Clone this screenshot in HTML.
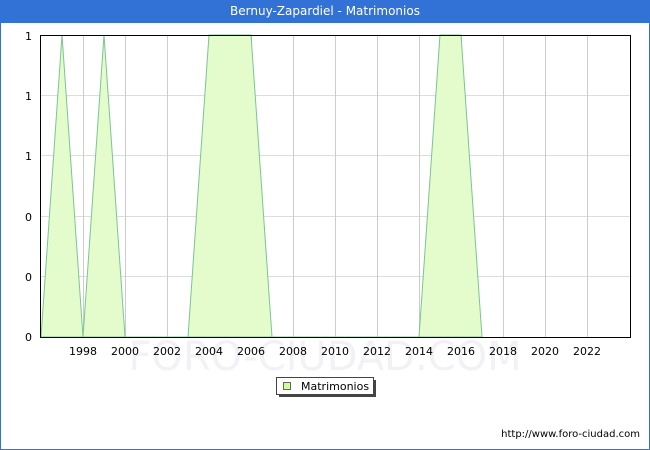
<!DOCTYPE html><html><head><style>
body{margin:0;width:650px;height:450px;overflow:hidden;font-family:"DejaVu Sans","Liberation Sans",sans-serif;}
.f{position:absolute;left:0;top:0;width:648px;height:448px;border:1px solid #3272d6;background:#fff}
.t{position:absolute;left:0;top:0;width:650px;height:23px;background:#3272d6;color:#fff;font-size:12px;text-align:center;line-height:23px}
</style></head><body><div class="f"></div><div class="t">Bernuy-Zapardiel - Matrimonios</div>
<svg width="650" height="450" style="position:absolute;left:0;top:0" font-family="DejaVu Sans, Liberation Sans, sans-serif" font-size="11">
<text x="325" y="370" font-size="40" fill="#f2f2f6" text-anchor="middle">FORO-CIUDAD.COM</text>
<g stroke="#ddd" stroke-width="1">
<line x1="40" x2="630" y1="95.5" y2="95.5"/><line x1="40" x2="630" y1="155.5" y2="155.5"/><line x1="40" x2="630" y1="216.5" y2="216.5"/><line x1="40" x2="630" y1="276.5" y2="276.5"/>
</g>
<g stroke="#ccc" stroke-width="1">
<line x1="83.5" x2="83.5" y1="35" y2="337"/><line x1="125.5" x2="125.5" y1="35" y2="337"/><line x1="167.5" x2="167.5" y1="35" y2="337"/><line x1="209.5" x2="209.5" y1="35" y2="337"/><line x1="251.5" x2="251.5" y1="35" y2="337"/><line x1="293.5" x2="293.5" y1="35" y2="337"/><line x1="335.5" x2="335.5" y1="35" y2="337"/><line x1="377.5" x2="377.5" y1="35" y2="337"/><line x1="419.5" x2="419.5" y1="35" y2="337"/><line x1="461.5" x2="461.5" y1="35" y2="337"/><line x1="503.5" x2="503.5" y1="35" y2="337"/><line x1="545.5" x2="545.5" y1="35" y2="337"/><line x1="587.5" x2="587.5" y1="35" y2="337"/>
</g>
<polygon points="41,337 62,35 83,337 104,35 125,337 188,337 209,35 251,35 272,337 419,337 440,35 461,35 482,337" fill="#e4fccc" stroke="#7cc494" stroke-width="1"/>
<rect x="40.5" y="35.5" width="590" height="302" fill="none" stroke="#000"/>
<g text-anchor="end"><text x="32" y="40">1</text><text x="32" y="100">1</text><text x="32" y="160">1</text><text x="32" y="221">0</text><text x="32" y="281">0</text><text x="32" y="341">0</text></g>
<g text-anchor="middle"><text x="83" y="355">1998</text><text x="125" y="355">2000</text><text x="167" y="355">2002</text><text x="209" y="355">2004</text><text x="251" y="355">2006</text><text x="293" y="355">2008</text><text x="335" y="355">2010</text><text x="377" y="355">2012</text><text x="419" y="355">2014</text><text x="461" y="355">2016</text><text x="503" y="355">2018</text><text x="545" y="355">2020</text><text x="587" y="355">2022</text></g>
<rect x="279" y="380" width="97" height="17" fill="#444"/>
<rect x="276.5" y="377.5" width="97" height="17" fill="#fff" stroke="#444"/>
<rect x="283.5" y="382.5" width="7" height="7" fill="#ccff99" stroke="#666"/>
<text x="301" y="390">Matrimonios</text>
<text x="640" y="437" font-size="10" text-anchor="end">http://www.foro-ciudad.com</text>
</svg></body></html>
